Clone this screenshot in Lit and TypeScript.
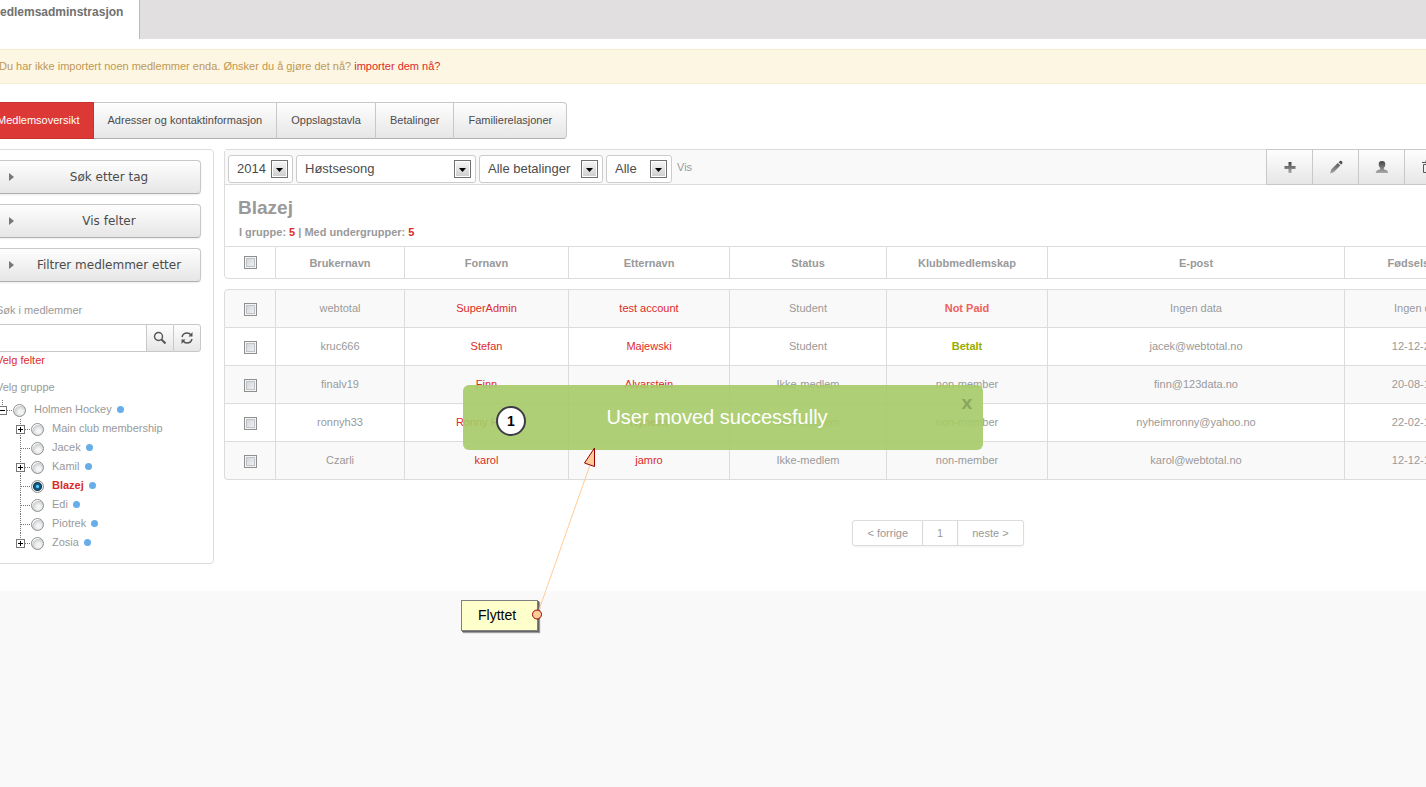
import { LitElement, html, css, svg, nothing } from "lit";
import { customElement, state } from "lit/decorators.js";
import { classMap } from "lit/directives/class-map.js";

interface Member {
  user: string;
  first: string;
  last: string;
  status: string;
  membership: string;
  tone: "" | "unpaid" | "paid";
  email: string;
  born: string;
}

interface Group {
  name: string;
  node: "plus" | "leaf";
  dot: boolean;
}

const MEMBERS: Member[] = [
  { user: "webtotal", first: "SuperAdmin", last: "test account", status: "Student", membership: "Not Paid", tone: "unpaid", email: "Ingen data", born: "Ingen data" },
  { user: "kruc666", first: "Stefan", last: "Majewski", status: "Student", membership: "Betalt", tone: "paid", email: "jacek@webtotal.no", born: "12-12-2013" },
  { user: "finalv19", first: "Finn", last: "Alvarstein", status: "Ikke-medlem", membership: "non-member", tone: "", email: "finn@123data.no", born: "20-08-1970" },
  { user: "ronnyh33", first: "Ronny Hugo", last: "Nyheim", status: "Ikke-medlem", membership: "non-member", tone: "", email: "nyheimronny@yahoo.no", born: "22-02-1975" },
  { user: "Czarli", first: "karol", last: "jamro", status: "Ikke-medlem", membership: "non-member", tone: "", email: "karol@webtotal.no", born: "12-12-1980" },
];

const GROUPS: Group[] = [
  { name: "Main club membership", node: "plus", dot: false },
  { name: "Jacek", node: "leaf", dot: true },
  { name: "Kamil", node: "plus", dot: true },
  { name: "Blazej", node: "leaf", dot: true },
  { name: "Edi", node: "leaf", dot: true },
  { name: "Piotrek", node: "leaf", dot: true },
  { name: "Zosia", node: "plus", dot: true },
];

const TABS = ["Medlemsoversikt", "Adresser og kontaktinformasjon", "Oppslagstavla", "Betalinger", "Familierelasjoner"];
const COLUMNS = ["Brukernavn", "Fornavn", "Etternavn", "Status", "Klubbmedlemskap", "E-post", "Fødselsdato"];

const treeIcon = (kind: "minus" | "plus" | "leaf", last = false) => html`
  <svg class="branch" width="15" height="19" viewBox="0 0 15 19" shape-rendering="crispEdges" aria-hidden="true">
    <path d=${kind === "minus" ? "M4.5 0V6" : last ? "M4.5 0V10" : "M4.5 0V19"} stroke="#777" stroke-dasharray="1 1" fill="none" />
    <path d="M5 10.5H15" stroke="#777" stroke-dasharray="1 1" fill="none" />
    ${kind === "leaf"
      ? nothing
      : svg`<rect x="0.5" y="6.5" width="8" height="8" fill="#fff" stroke="#777" />
          <path d=${kind === "plus" ? "M2 10.5H7M4.5 8V13" : "M2 10.5H7"} stroke="#000" fill="none" />`}
  </svg>`;

const GRAD = svg`<defs><linearGradient id="g" x1="0" y1="0" x2="0" y2="1"><stop offset="0" stop-color="#444"/><stop offset="1" stop-color="#aaa"/></linearGradient></defs>`;

const TOOLS = [
  { label: "Legg til", icon: svg`<path d="M6.500 3h3v4h4v3h-4v4h-3v-4h-4V7h4z" fill="url(#g)"/>` },
  { label: "Rediger", icon: svg`<path d="M2 14.500l1.200-4L9.800 4 12.300 6.500 5.800 13.200zM10.600 3.200L12 1.900Q13 1.400 13.900 2.300T14.300 4.500L13.100 5.700z" fill="url(#g)"/>` },
  { label: "Medlem", icon: svg`<path d="M8 2C10.200 2 11.300 3.200 11.300 5.200 11.300 7 10.600 8 9.800 9v1.200C11.200 10.900 14.200 11.200 14.200 14H1.800c0-2.800 3-3.100 4.400-3.800V9C5.400 8 4.700 7 4.700 5.200 4.700 3.200 5.800 2 8 2z" fill="url(#g)"/>` },
  { label: "Slett", icon: svg`<path d="M2 3.500h12M6 3V1.500h4V3M3.500 5.500v8h9v-8zM6.500 6v7M9.500 6v7" fill="none" stroke="#555"/>` },
  { label: "Send", icon: svg`<path d="M2 4h12v9H2zM2 4l6 5 6-5" fill="none" stroke="#555"/>` },
];

@customElement("app-root")
export class AppRoot extends LitElement {
  @state() private group = "Blazej";
  @state() private toast = true;

  static styles = css`
    :host {
      display: block;
      position: relative;
      min-height: 100vh;
      overflow: hidden;
      background: #f9f9f9;
      color: #999;
      font: 11px/16px "Liberation Sans", Arial, sans-serif;
    }
    * { box-sizing: border-box; }
    a { color: #dc2b27; text-decoration: none; }
    button, input, select { font: inherit; color: inherit; margin: 0; border-radius: 0; }
    button { cursor: pointer; }
    .page { margin: 0 -70px 0 -16px; padding-bottom: 27px; background: #fff; }

    .topbar { display: flex; height: 39px; background: #e1dfe0; }
    .topbar a {
      padding: 4px 16px 0 6px;
      background: #fff;
      border-right: 1px solid #bbb;
      color: #707070;
      font-size: 12px;
      font-weight: bold;
    }
    .alert {
      margin-top: 10px;
      padding: 8px 15px 9px 14px;
      background: #fdf6e3;
      border: 1px solid #f8ecd0;
      color: #c09853;
    }
    .tabs { display: flex; margin-top: 18px; }
    .tabs a {
      padding: 9px 14px 10px;
      color: #4c4c4c;
      background: linear-gradient(#fefefe, #e6e6e6);
      border: 1px solid #c8c8c8;
      border-bottom-color: #b0b0b0;
      border-left: 0;
    }
    .tabs a:last-child { border-radius: 0 4px 4px 0; }
    .tabs a.on { padding-inline: 13px; background: #dc3835; border-color: #c73230; color: #fff; }

    .body { display: flex; align-items: flex-start; gap: 10px; margin-top: 10px; }
    .side {
      flex: none;
      width: 230px;
      padding: 10px 12px 11px 11px;
      border: 1px solid #dcdcdc;
      border-radius: 4px;
    }
    .filters { display: grid; gap: 10px; }
    .filter {
      display: flex;
      align-items: center;
      height: 34px;
      padding: 0 12px;
      background: linear-gradient(#fefefe, #e6e6e6);
      border: 1px solid #c8c8c8;
      border-bottom-color: #b0b0b0;
      border-radius: 4px;
      box-shadow: 0 1px 2px rgba(0, 0, 0, 0.08);
      color: #4c4c4c;
      font: 12px/16px Verdana, "DejaVu Sans", sans-serif;
    }
    .filter span { flex: 1; padding-left: 16px; }
    .caption { display: block; margin-top: 20px; }
    .search { display: flex; height: 28px; margin-top: 6px; }
    .search input { flex: 1; min-width: 0; border: 1px solid #c8c8c8; border-right: 0; padding: 0 6px; background: #fff; }
    .search button {
      display: grid;
      place-items: center;
      width: 27px;
      padding: 0;
      background: linear-gradient(#fefefe, #e6e6e6);
      border: 1px solid #c8c8c8;
      border-right-width: 0;
    }
    .search button:last-child { width: 28px; border-right-width: 1px; border-radius: 0 3px 3px 0; }
    .pick { display: block; }
    .legend { margin: 11px 0 5px; }
    .tree, .tree ul { list-style: none; margin: 0; padding: 0; }
    .tree { padding-left: 2px; }
    .tree ul { padding-left: 18px; }
    .node { display: flex; align-items: center; height: 19px; }
    .node label { padding: 0 0 2px 8px; }
    .node.on label { color: #dc2b27; font-weight: bold; }
    .branch { display: block; flex: none; }
    .dot { width: 7px; height: 7px; margin-left: 5px; border-radius: 50%; background: #67aee8; }
    input[type="radio"] {
      appearance: none;
      width: 13px;
      height: 13px;
      margin-top: 2px;
      border: 1px solid #8e8f8f;
      border-radius: 50%;
      background: radial-gradient(circle at 60% 65%, #f4f4f4 20%, #cdd0d3 60%, #fff 70%);
    }
    input[type="radio"]:checked {
      background: radial-gradient(circle, #5fd0f5 0 1px, #0d5a8c 2px 3px, #12334a 4px, #eee 5px);
    }
    input[type="checkbox"] {
      appearance: none;
      display: block;
      width: 13px;
      height: 13px;
      margin: 0 auto;
      border: 1px solid #8e8f8f;
      background: linear-gradient(135deg, #cbcfd5, #f6f6f6);
      box-shadow: inset 0 0 0 1px #f4f4f4, inset 0 0 0 2px #bfc3c8;
    }
    td input[type="checkbox"] { margin-top: 4px; }

    .main { flex: 1; min-width: 0; }
    .head { border: 1px solid #dcdcdc; border-width: 1px 0 0 1px; border-radius: 4px 0 0 0; }
    .toolbar {
      display: flex;
      justify-content: space-between;
      height: 35px;
      background: #f9f9f9;
      border-bottom: 1px solid #dcdcdc;
    }
    .selects { display: flex; align-items: flex-end; gap: 3px; padding: 0 0 1px 3px; }
    .selects select {
      appearance: none;
      height: 28px;
      padding: 0 24px 0 8px;
      border: 1px solid #ccc;
      border-radius: 3px;
      color: #4c4c4c;
      font-size: 13px;
      background: #fff url("data:image/svg+xml,%3Csvg xmlns='http://www.w3.org/2000/svg' width='17' height='18'%3E%3ClinearGradient id='a' x2='0' y2='1'%3E%3Cstop stop-color='%23f4f4f4'/%3E%3Cstop offset='1' stop-color='%23cfcfcf'/%3E%3C/linearGradient%3E%3Crect x='.5' y='.5' width='16' height='17' fill='%23fff' stroke='%23707070'/%3E%3Crect x='2' y='2' width='13' height='14' fill='url(%23a)'/%3E%3Cpath d='M5 8h7l-3.500 4z'/%3E%3C/svg%3E") no-repeat right 4px center;
    }
    .year { width: 65px; }
    .season { width: 180px; }
    .pay { width: 124px; }
    .all { width: 66px; }
    .selects a { align-self: center; padding-left: 2px; color: #999; }
    .tools { display: flex; margin-top: -1px; }
    .tools button {
      display: grid;
      place-items: center;
      width: 46px;
      height: 36px;
      padding: 0;
      background: linear-gradient(#fefefe, #e6e6e6);
      border: 1px solid #c8c8c8;
      border-right: 0;
    }
    .title { padding: 11px 13px 6px; font-weight: bold; }
    .title h1 { margin: 0 0 5px; font-size: 19px; line-height: 23px; }
    .title p { margin: 0; padding-left: 1px; }
    .title b { color: #dc2b27; }

    table { width: 100%; table-layout: fixed; border-collapse: separate; border-spacing: 0; }
    .c-check { width: 52px; }
    .c-user { width: 129px; }
    .c-first { width: 164px; }
    .c-last { width: 161px; }
    .c-status { width: 157px; }
    .c-club { width: 161px; }
    .c-born { width: 151px; }
    th, td { padding: 0; text-align: center; border-right: 1px solid #dcdcdc; border-bottom: 1px solid #dcdcdc; }
    th { height: 33px; border-top: 1px solid #dcdcdc; }
    td { height: 38px; padding-bottom: 2px; }
    th:first-child, td:first-child { border-left: 1px solid #dcdcdc; }
    th:first-child { border-bottom-left-radius: 4px; }
    tbody::before { content: ""; display: table-row; height: 10px; }
    tbody tr:first-child td { height: 39px; border-top: 1px solid #dcdcdc; }
    tbody tr:first-child td:first-child { border-top-left-radius: 4px; }
    tbody tr:last-child td:first-child { border-bottom-left-radius: 4px; }
    tbody tr:nth-child(odd) td { background: #f9f9f9; }
    .unpaid { color: #f0605c; font-weight: bold; }
    .paid { color: #97ab00; font-weight: bold; }

    .pager { display: flex; justify-content: center; margin-top: 40px; padding-left: 156px; }
    .pager a {
      padding: 4px 14px;
      border: 1px solid #dcdcdc;
      border-left-width: 0;
      color: #999;
      box-shadow: 0 1px 2px rgba(0, 0, 0, 0.06);
    }
    .pager a:first-child { border-left-width: 1px; border-radius: 3px 0 0 3px; }
    .pager a:last-child { border-radius: 0 3px 3px 0; }

    .toast {
      position: absolute;
      top: 385px;
      left: 50%;
      width: 520px;
      height: 65px;
      margin-left: -250px;
      display: grid;
      grid-template-columns: 96px 1fr 32px;
      border-radius: 6px;
      background: rgba(165, 202, 102, 0.9);
      color: #fff;
    }
    .badge {
      align-self: center;
      justify-self: center;
      display: grid;
      place-items: center;
      width: 30px;
      height: 30px;
      margin-top: 6px;
      border: 2px solid #3c3c46;
      border-radius: 50%;
      background: #fff;
      color: #000;
      font-size: 14px;
      font-weight: bold;
    }
    .message { margin: 0; padding: 20px 76px 0 0; text-align: center; font-size: 20px; line-height: 24px; }
    .close {
      align-self: start;
      margin-top: 8px;
      padding: 0;
      border: 0;
      background: none;
      color: #8aa75c;
      font: bold 14px/22px "DejaVu Sans", sans-serif;
    }
    .note {
      position: absolute;
      top: 600px;
      left: 461px;
      padding: 5px 21px 5px 16px;
      border: 1px solid #808080;
      background: #ffffcc;
      box-shadow: 1px 1px 0 #666, 2px 2px 1px #999;
      color: #000;
      font-size: 14px;
      line-height: 19px;
    }
    .arrow { position: absolute; top: 440px; left: 520px; pointer-events: none; }
  `;

  private groupNode(name: string, kind: "minus" | "plus" | "leaf", dot: boolean, last = false) {
    const id = "g-" + name.replace(/ /g, "-").toLowerCase();
    return html`<div class=${classMap({ node: true, on: this.group === name })}>
      ${treeIcon(kind, last)}
      <input type="radio" name="group" id=${id} .checked=${this.group === name} @change=${() => (this.group = name)} />
      <label for=${id}>${name}</label>
      ${dot ? html`<span class="dot"></span>` : nothing}
    </div>`;
  }

  render() {
    return html`
      <div class="page">
        <nav class="topbar"><a href="#">Medlemsadminstrasjon</a></nav>
        <div class="alert">
          Du har ikke importert noen medlemmer enda. Ønsker du å gjøre det nå? <a href="#">importer dem nå?</a>
        </div>
        <nav class="tabs">
          ${TABS.map((t, i) => html`<a href="#" class=${classMap({ on: i === 0 })}>${t}</a>`)}
        </nav>
        <div class="body">
          <aside class="side">
            <div class="filters">
              ${["Søk etter tag", "Vis felter", "Filtrer medlemmer etter"].map(
                (f) => html`<button class="filter">
                  <svg width="5" height="8" viewBox="0 0 5 8" aria-hidden="true"><path d="M0 0L5 4 0 8z" fill="#777" /></svg>
                  <span>${f}</span>
                </button>`
              )}
            </div>
            <label class="caption" for="q">Søk i medlemmer</label>
            <div class="search">
              <input id="q" type="text" />
              <button aria-label="Søk">
                <svg width="14" height="14" viewBox="0 0 14 14" fill="none" stroke="#555">
                  <circle cx="5.500" cy="5.500" r="4" stroke-width="1.400" /><path d="M8.500 8.500L12.500 12.500" stroke-width="2" />
                </svg>
              </button>
              <button aria-label="Oppdater">
                <svg width="14" height="14" viewBox="0 0 14 14" fill="none" stroke="#555" stroke-width="1.400">
                  <path d="M2 6Q3 2 7 2 9.500 2 11 4M12 8Q11 12 7 12 4.500 12 3 10" />
                  <path d="M12.500 1V5.500H8.500zM1.500 13V8.500H5.500z" fill="#555" stroke="none" />
                </svg>
              </button>
            </div>
            <a class="pick" href="#">Velg felter</a>
            <div class="legend">Velg gruppe</div>
            <ul class="tree">
              <li>
                ${this.groupNode("Holmen Hockey", "minus", true)}
                <ul>
                  ${GROUPS.map((g, i) => html`<li>${this.groupNode(g.name, g.node, g.dot, i === GROUPS.length - 1)}</li>`)}
                </ul>
              </li>
            </ul>
          </aside>

          <main class="main">
            <div class="head">
              <div class="toolbar">
                <div class="selects">
                  <select class="year" aria-label="År"><option>2014</option></select>
                  <select class="season" aria-label="Sesong"><option>Høstsesong</option></select>
                  <select class="pay" aria-label="Betalinger"><option>Alle betalinger</option></select>
                  <select class="all" aria-label="Utvalg"><option>Alle</option></select>
                  <a href="#">Vis</a>
                </div>
                <div class="tools">
                  ${TOOLS.map(
                    (t) => html`<button aria-label=${t.label}>
                      <svg width="16" height="16" viewBox="0 0 16 16" aria-hidden="true">${GRAD}${t.icon}</svg>
                    </button>`
                  )}
                </div>
              </div>
              <div class="title">
                <h1>${this.group}</h1>
                <p>I gruppe: <b>5</b> | Med undergrupper: <b>5</b></p>
              </div>
            </div>
            <table>
              <colgroup>
                <col class="c-check" /><col class="c-user" /><col class="c-first" /><col class="c-last" />
                <col class="c-status" /><col class="c-club" /><col /><col class="c-born" />
              </colgroup>
              <thead>
                <tr>
                  <th><input type="checkbox" aria-label="Velg alle" /></th>
                  ${COLUMNS.map((c) => html`<th scope="col">${c}</th>`)}
                </tr>
              </thead>
              <tbody>
                ${MEMBERS.map(
                  (m) => html`<tr>
                    <td><input type="checkbox" aria-label=${m.user} /></td>
                    <td>${m.user}</td>
                    <td><a href="#">${m.first}</a></td>
                    <td><a href="#">${m.last}</a></td>
                    <td>${m.status}</td>
                    <td class=${m.tone}>${m.membership}</td>
                    <td>${m.email}</td>
                    <td>${m.born}</td>
                  </tr>`
                )}
              </tbody>
            </table>
            <nav class="pager"><a href="#">&lt; forrige</a><a href="#">1</a><a href="#">neste &gt;</a></nav>
          </main>
        </div>
      </div>

      ${this.toast
        ? html`<div class="toast" role="status">
            <span class="badge">1</span>
            <p class="message">User moved successfully</p>
            <button class="close" aria-label="Lukk" @click=${() => (this.toast = false)}>X</button>
          </div>`
        : nothing}
      <div class="note">Flyttet</div>
      <svg class="arrow" width="90" height="190" viewBox="0 0 90 190" aria-hidden="true">
        <path d="M19 170L71 22" stroke="#ffcc99" fill="none" />
        <path d="M74.500 8L64.500 23 74.500 26.500z" fill="#ffcc99" stroke="#990000" />
        <circle cx="17" cy="174.500" r="4.500" fill="#ffcc99" stroke="#990000" />
      </svg>
    `;
  }
}
